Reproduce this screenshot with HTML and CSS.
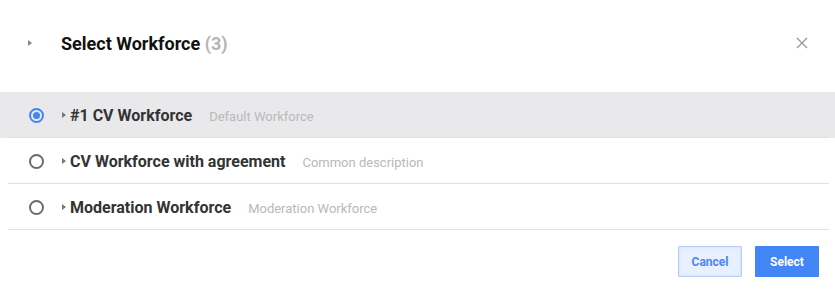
FILE: index.html
```html
<!DOCTYPE html>
<html lang="en">
<head>
  <meta charset="UTF-8" />
  <title>Select Workforce</title>
  <link rel="stylesheet" href="styles.css">
</head>
<body>
<div class="dialog">
  <div class="dialog-header">
    <span class="caret head-caret"></span>
    <h1 class="title">Select Workforce <span class="count">(3)</span></h1>
    <button class="close" aria-label="Close">
      <svg width="12" height="12" viewBox="0 0 12 12"><path d="M1 1L11 11M11 1L1 11" stroke="#9a9a9a" stroke-width="1.4" fill="none"/></svg>
    </button>
  </div>

  <ul class="list">
    <li class="item selected">
      <span class="radio checked"></span>
      <span class="caret"></span>
      <span class="name">#1 CV Workforce</span>
      <span class="desc">Default Workforce</span>
    </li>
    <li class="item">
      <span class="radio"></span>
      <span class="caret"></span>
      <span class="name">CV Workforce with agreement</span>
      <span class="desc">Common description</span>
    </li>
    <li class="item">
      <span class="radio"></span>
      <span class="caret"></span>
      <span class="name">Moderation Workforce</span>
      <span class="desc">Moderation Workforce</span>
    </li>
  </ul>

  <div class="actions">
    <button class="btn btn-cancel">Cancel</button>
    <button class="btn btn-select">Select</button>
  </div>
</div>
</body>
</html>
```

FILE: styles.css
```css
body { margin: 0; font-family: Roboto, "Liberation Sans", sans-serif; background: #fff; color: #333; }
.dialog { width: 835px; height: 304px; }

.dialog-header { height: 92px; display: flex; align-items: center; padding: 0 0 6px 28px; box-sizing: border-box; }
.title { margin: 0 0 0 29px; font-size: 18px; font-weight: 700; color: #111; flex: 1; }
.count { color: #b5b5b5; }
.close { background: none; border: none; padding: 0; margin-right: 27px; width: 12px; height: 12px; cursor: pointer; display: flex; }

.caret { width: 0; height: 0; border-top: 3px solid transparent; border-bottom: 3px solid transparent; border-left: 4px solid #777; display: inline-block; }
.head-caret { border-left-color: #888; }

.list { list-style: none; margin: 0; padding: 0; }
.item { position: relative; height: 46px; display: flex; align-items: center; padding-left: 29px; box-sizing: border-box; }
.item::after { content: ""; position: absolute; left: 8px; right: 6px; bottom: 0; height: 1px; background: #e0e0e0; }
.item.selected { background: #e9e9eb; }

.radio { width: 11px; height: 11px; border: 2px solid #6b6b6b; border-radius: 50%; display: inline-flex; align-items: center; justify-content: center; }
.radio.checked { border-color: #4285f4; }
.radio.checked::before { content: ""; width: 7px; height: 7px; border-radius: 50%; background: #4285f4; }
.item .caret { margin-left: 18px; margin-right: 4px; }

.name { font-size: 16px; font-weight: 700; color: #333; }
.desc { font-size: 13px; color: #b9b9b9; margin-left: 17px; padding-top: 2px; }

.actions { display: flex; justify-content: flex-end; gap: 13px; padding: 16px 16px 0 0; }
.btn { height: 31px; width: 64px; font-family: inherit; font-size: 12px; font-weight: 700; border-radius: 1px; cursor: pointer; }
.btn-cancel { background: #e8f0fe; color: #4d86ee; border: 1px solid #b5cdf7; box-shadow: inset 0 0 3px #c7d9fa; }
.btn-select { background: #4285f4; color: #fff; border: none; }
```
